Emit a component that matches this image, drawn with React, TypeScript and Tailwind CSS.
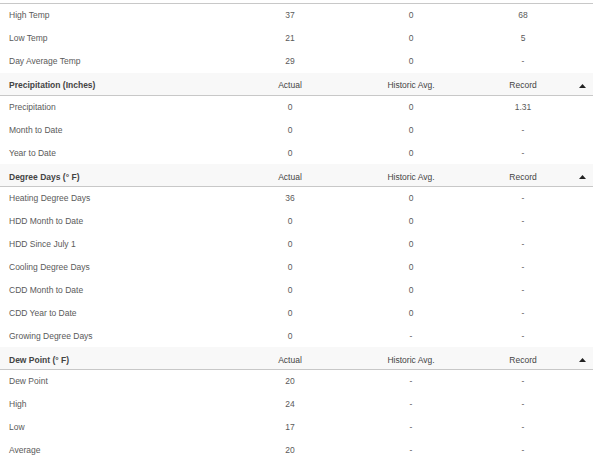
const sections = [
  {
    title: null,
    rows: [
      ["High Temp", "37", "0", "68"],
      ["Low Temp", "21", "0", "5"],
      ["Day Average Temp", "29", "0", "-"],
    ],
  },
  {
    title: "Precipitation (Inches)",
    rows: [
      ["Precipitation", "0", "0", "1.31"],
      ["Month to Date", "0", "0", "-"],
      ["Year to Date", "0", "0", "-"],
    ],
  },
  {
    title: "Degree Days (° F)",
    rows: [
      ["Heating Degree Days", "36", "0", "-"],
      ["HDD Month to Date", "0", "0", "-"],
      ["HDD Since July 1", "0", "0", "-"],
      ["Cooling Degree Days", "0", "0", "-"],
      ["CDD Month to Date", "0", "0", "-"],
      ["CDD Year to Date", "0", "0", "-"],
      ["Growing Degree Days", "0", "-", "-"],
    ],
  },
  {
    title: "Dew Point (° F)",
    rows: [
      ["Dew Point", "20", "-", "-"],
      ["High", "24", "-", "-"],
      ["Low", "17", "-", "-"],
      ["Average", "20", "-", "-"],
    ],
  },
]

const cols = "grid grid-cols-[232px_116px_126px_98px_21px] items-center"

function Caret() {
  return (
    <svg width="7" height="4" viewBox="0 0 7 4" className="mx-auto">
      <polygon points="0,4 3.5,0 7,4" fill="#222" />
    </svg>
  )
}

function HeaderRow({ title }: { title: string }) {
  return (
    <div className={`${cols} h-[22.9px] pt-[4px] bg-[#f8f8f8] border-b border-[#c8c8c8] text-[#444]`}>
      <div className="pl-[9px] font-bold">{title}</div>
      <div className="text-center">Actual</div>
      <div className="text-center">Historic Avg.</div>
      <div className="text-center">Record</div>
      <div>
        <Caret />
      </div>
    </div>
  )
}

function DataRow({ row }: { row: string[] }) {
  return (
    <div className={`${cols} h-[22.9px] text-[#5a5a5a]`}>
      <div className="pl-[9px]">{row[0]}</div>
      <div className="text-center">{row[1]}</div>
      <div className="text-center">{row[2]}</div>
      <div className="text-center">{row[3]}</div>
      <div />
    </div>
  )
}

export default function App() {
  return (
    <div className="w-[600px] h-[460px] bg-white overflow-hidden font-['Liberation_Sans',Arial,sans-serif] text-[8.5px] leading-none">
      <div className="w-[593px] pt-[3px]">
        <div className="border-b border-[#c8c8c8]" />
        {sections.map((s, i) => (
          <div key={i}>
            {s.title && <HeaderRow title={s.title} />}
            {s.rows.map((r, j) => (
              <DataRow key={j} row={r} />
            ))}
          </div>
        ))}
      </div>
    </div>
  )
}
